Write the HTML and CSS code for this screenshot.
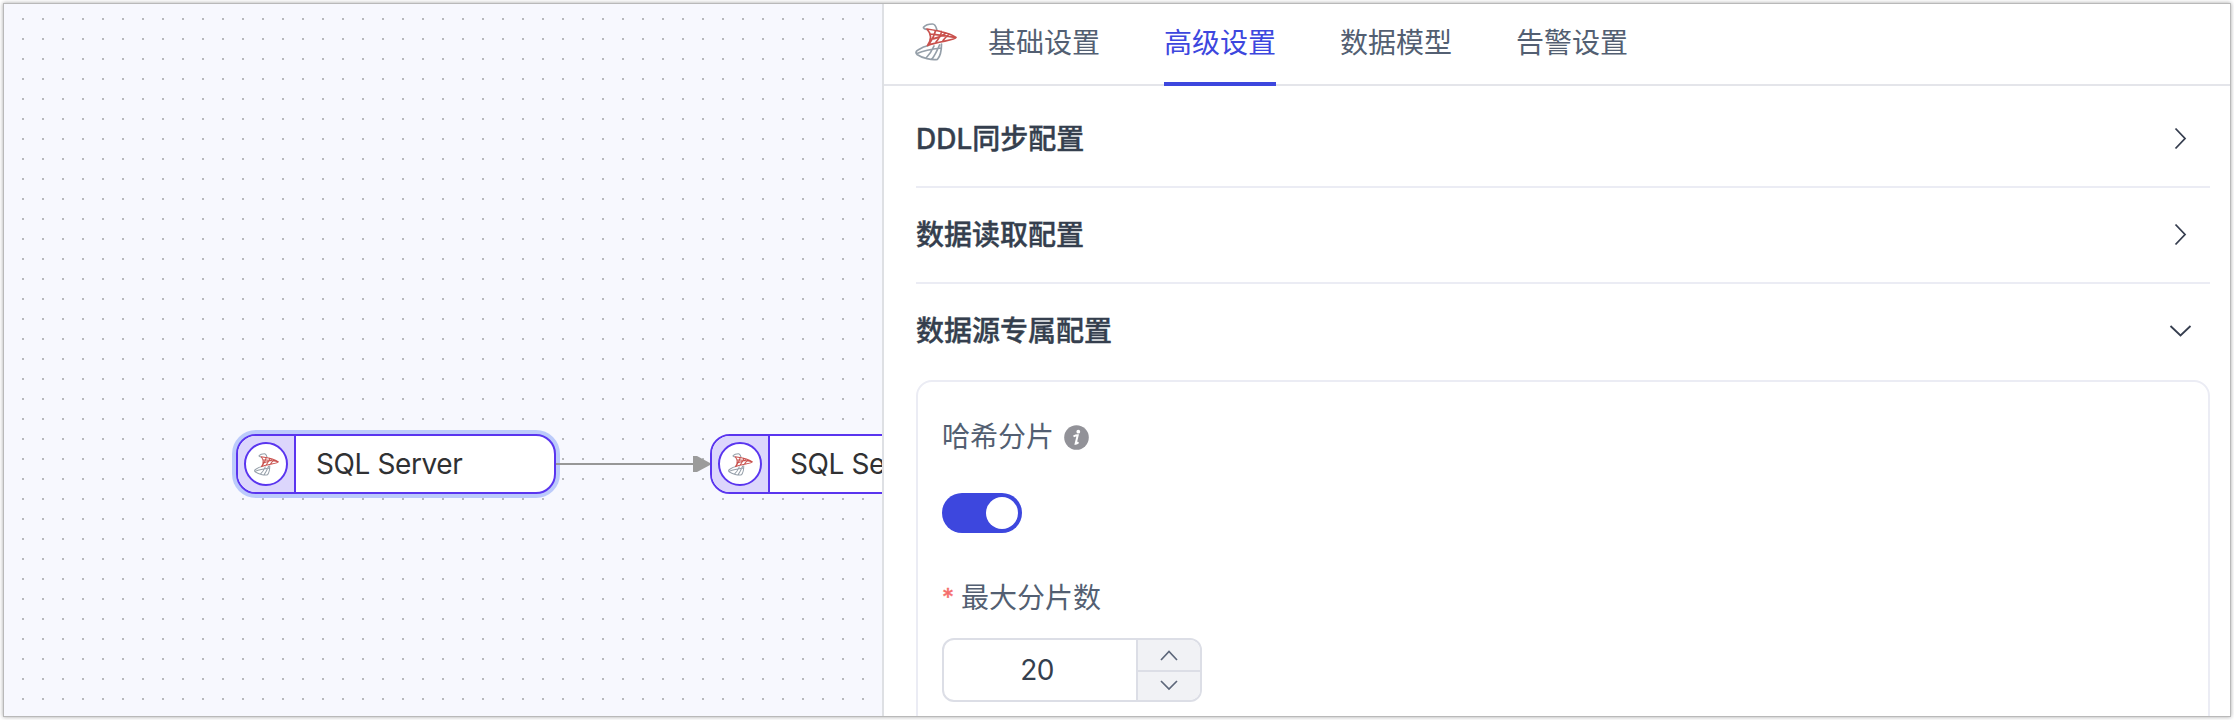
FILE: index.html
```html
<!DOCTYPE html>
<html lang="zh-CN">
<head>
<meta charset="utf-8">
<title>高级设置</title>
<link rel="stylesheet" href="styles.css">
</head>
<body>
<svg class="defs" width="0" height="0" aria-hidden="true">
  <symbol id="sqlserver" viewBox="0 0 42 38">
    <g fill="none" stroke-linecap="round" stroke-linejoin="round">
      <g stroke="#959fa9" stroke-width="1.700">
        <path d="M12 6.500C9.500 6 8 5 8.500 4.200C10 2.500 14 1 17.500 1C19.500 1 21 3.500 21.800 6.500"/>
        <path d="M26.500 21C26.500 27 25.500 33 22.500 36.300C17 37.500 7 35 2 31.500C.5 30 .6 28.500 3 27C6 25 10 23 13.500 22.500M26 25C18 26 8 28 2 30.500M19 23C17 27.500 15 31 11.500 34.500M24.500 22C22 28 20 32 17 36"/>
      </g>
      <path stroke="#c9514d" stroke-width="1.700" d="M12 6C22 7.500 35 9.500 41 14.500C40 17.500 24 18 12.500 22.500C16.500 17 16.500 11 12 6ZM15 11C24 12 32 12.500 40 14.500M15 16.500C21 15.500 27 13 31 10M20.500 7.500C19.500 12 17.500 16 14 21M26.500 8.500C26 12 24 15.500 21 19M34 11C32 13 30 15 28 17.500"/>
    </g>
  </symbol>
</svg>
<div class="window">
  <main class="canvas">
    <div class="node node-source selected">
      <span class="node-side"><span class="node-icon"><svg width="25" height="23"><use href="#sqlserver"/></svg></span></span>
      <span class="node-name">SQL Server</span>
    </div>
    <div class="node node-target">
      <span class="node-side"><span class="node-icon"><svg width="25" height="23"><use href="#sqlserver"/></svg></span></span>
      <span class="node-name">SQL Server</span>
    </div>
    <svg class="edge" width="156" height="16" viewBox="0 0 156 16"><path d="M0 8H138" stroke="#979797" stroke-width="2"/><path d="M137 0H141L154 7V9L141 16H137Z" fill="#9b9b9b"/></svg>
  </main>
  <aside class="panel">
    <header class="tabs">
      <svg class="logo" width="42" height="38"><use href="#sqlserver"/></svg>
      <a class="tab">基础设置</a>
      <a class="tab active">高级设置</a>
      <a class="tab">数据模型</a>
      <a class="tab">告警设置</a>
    </header>
    <div class="sections">
      <div class="section"><h3>DDL同步配置</h3><svg class="chevron" width="24" height="24" viewBox="0 0 24 24"><path d="M7.500 1.500L17 11.500L7.500 21.500"/></svg></div>
      <div class="section"><h3>数据读取配置</h3><svg class="chevron" width="24" height="24" viewBox="0 0 24 24"><path d="M7.500 1.500L17 11.500L7.500 21.500"/></svg></div>
      <div class="section open"><h3>数据源专属配置</h3><svg class="chevron" width="24" height="24" viewBox="0 0 24 24"><path d="M2.500 7L12.500 16.500L22.500 7"/></svg></div>
      <div class="card">
        <div class="label">哈希分片
          <svg class="info" width="25" height="25" viewBox="0 0 25 25"><circle cx="12.500" cy="12.500" r="12.300" fill="#929298"/><circle cx="14.300" cy="6.700" r="1.900" fill="#fff"/><path d="M9.500 11.500Q11.500 10.300 13.700 10.300L11.600 18.800Q12.800 18.900 14.500 17.300" fill="none" stroke="#fff" stroke-width="2"/></svg>
        </div>
        <div class="switch"><i></i></div>
        <div class="label required"><span class="star">*</span>最大分片数</div>
        <div class="number">
          <span class="value">20</span>
          <span class="steps">
            <span class="step"><svg width="18" height="11" viewBox="0 0 18 11"><path d="M1 10L9 1.500L17 10"/></svg></span>
            <span class="step"><svg width="18" height="11" viewBox="0 0 18 11"><path d="M1 1L9 9L17 1"/></svg></span>
          </span>
        </div>
      </div>
    </div>
  </aside>
</div>
</body>
</html>
```

FILE: styles.css
```css
* { box-sizing: border-box; }
body {
  margin: 0;
  width: 2234px;
  height: 720px;
  padding: 4px;
  overflow: hidden;
  background: #fff;
  font: 28px/40px Inter, "Noto Sans CJK SC", sans-serif;
  color: #535f72;
}
.defs { position: absolute; }
.window {
  display: flex;
  width: 2226px;
  height: 712px;
  overflow: hidden;
  background: #fff;
  box-shadow: 0 0 0 1px #b9b9b9, 0 0 4px 1px rgba(0, 0, 0, .35);
}
.canvas {
  position: relative;
  width: 878px;
  overflow: hidden;
  background: conic-gradient(from 270deg at 2px 2px, #b8b9bd 0 25%, transparent 0) 18px 14px / 20px 20px, #f7f8fe;
}
.edge { position: absolute; left: 552px; top: 452px; }
.node {
  position: absolute;
  top: 430px;
  display: flex;
  width: 320px;
  height: 60px;
  overflow: hidden;
  border: 2px solid #5a35ef;
  border-radius: 20px;
  background: #fff;
}
.node-source { left: 232px; }
.node-target { left: 706px; }
.selected { box-shadow: 0 0 0 4px #bccbfb; }
.node-side {
  display: flex;
  align-items: center;
  flex: none;
  width: 58px;
  padding-left: 6px;
  border-right: 2px solid #5a35ef;
  background: #dcd6fc;
}
.node-icon {
  display: flex;
  align-items: center;
  justify-content: center;
  width: 44px;
  height: 44px;
  border: 2px solid #5a35ef;
  border-radius: 50%;
  background: #fff;
}
.node-name { padding: 8px 0 0 20px; white-space: nowrap; letter-spacing: -.4px; color: #303133; }
.panel {
  flex: 1;
  border-left: 2px solid #dee0e4;
  background: #fff;
}
.tabs {
  display: flex;
  align-items: center;
  gap: 64px;
  height: 82px;
  padding-left: 31px;
  border-bottom: 2px solid #e4e5ea;
}
.logo { margin: -5px -33px 0 0; }
.tab { height: 82px; padding-top: 19px; margin-bottom: -2px; border-bottom: 4px solid transparent; }
.tab.active { color: #3d47de; border-bottom-color: #3d47de; }
.sections { padding: 6px 20px 0 32px; }
.section {
  display: flex;
  align-items: center;
  justify-content: space-between;
  height: 96px;
  padding-right: 18px;
  border-bottom: 2px solid #ebecf4;
}
.section.open { border-bottom-color: transparent; }
.section h3 {
  margin: 0;
  font-size: 28px;
  font-weight: 500;
  color: #353f4e;
  -webkit-text-stroke: .4px #353f4e;
}
.chevron path { fill: none; stroke: #363e4f; stroke-width: 1.800; }
.card {
  height: 400px;
  margin-top: 0;
  padding: 35px 24px;
  border: 2px solid #ebecf4;
  border-radius: 16px;
}
.label { display: flex; align-items: center; height: 40px; }
.info { margin-left: 10px; }
.switch {
  width: 80px;
  height: 40px;
  margin: 36px 0 45px;
  padding: 4px;
  border-radius: 20px;
  background: #3d47de;
}
.switch i { display: block; width: 32px; height: 32px; margin-left: auto; border-radius: 50%; background: #fff; }
.star { width: 19px; font-size: 24px; color: #f56c6c; -webkit-text-stroke: .4px #f56c6c; }
.number {
  display: flex;
  width: 260px;
  height: 64px;
  margin-top: 20px;
  overflow: hidden;
  border: 2px solid #dcdee6;
  border-radius: 12px;
}
.value { flex: 1; padding: 10px 6px 0 0; text-align: center; letter-spacing: -.5px; color: #353f4e; }
.steps { width: 64px; border-left: 2px solid #dcdee6; background: #f1f2f5; }
.step { display: flex; align-items: center; justify-content: center; height: 30px; }
.step + .step { height: 32px; border-top: 2px solid #dcdee6; padding-bottom: 3px; }
.step svg { display: block; }
.step path { fill: none; stroke: #5d677a; stroke-width: 1.700; }
```
